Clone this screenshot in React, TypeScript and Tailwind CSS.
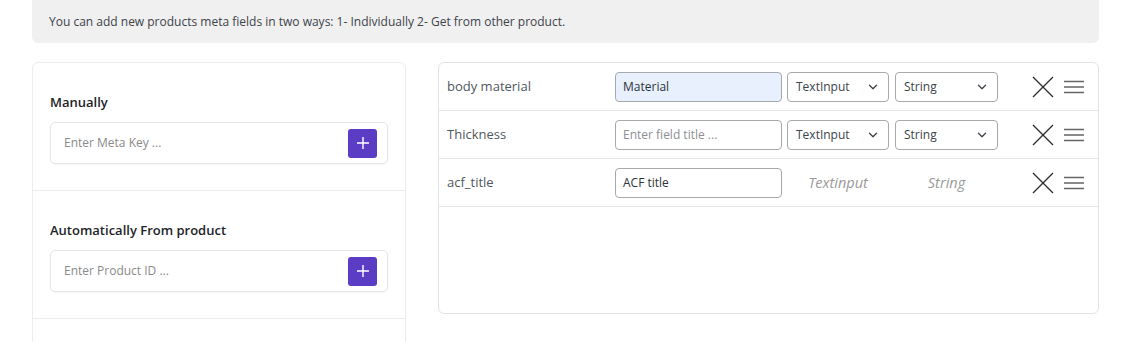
import { ChevronDown } from "lucide-react";

const font = { fontFamily: '"Open Sans", "Liberation Sans", sans-serif' };

interface Field {
  key: string;
  title: string;
  placeholder?: string;
  autofill?: boolean;
  editable: boolean;
}

const fields: Field[] = [
  { key: "body material", title: "Material", autofill: true, editable: true },
  { key: "Thickness", title: "", placeholder: "Enter field title ...", editable: true },
  { key: "acf_title", title: "ACF title", editable: false },
];

const PlusButton = () => (
  <button className="flex size-[29px] items-center justify-center rounded-[3px] bg-[#5b3cc4]">
    <svg width="14" height="14" viewBox="0 0 14 14">
      <path d="M7 1v12M1 7h12" stroke="#fff" strokeWidth="1.4" />
    </svg>
  </button>
);

const AddBox = ({ title, placeholder }: { title: string; placeholder: string }) => (
  <div className="h-[128px] border-b border-[#ececec] px-[17px] pt-[30px]">
    <p className="mb-[11px] h-[18px] text-[13px] font-semibold leading-[18px] text-[#1d2327]">{title}</p>
    <div className="flex h-[42px] items-center justify-between rounded-[5px] border border-[#e6e6e6] pl-[13px] pr-[10px] shadow-[0_1px_2px_rgba(0,0,0,0.04)]">
      <span className="text-[12px] text-[#8a8a8a]">{placeholder}</span>
      <PlusButton />
    </div>
  </div>
);

const Select = ({ value, w }: { value: string; w: string }) => (
  <div className={`flex h-[30px] ${w} items-center justify-between rounded-[4px] border border-[#a7aaad] pl-[8px] pr-[8px] text-[12px] text-[#3c434a]`}>
    <span>{value}</span>
    <ChevronDown className="size-[14px] text-[#3c434a]" strokeWidth={2.2} />
  </div>
);

const Row = ({ f }: { f: Field }) => (
  <div className="flex h-[48px] items-center border-b border-[#e6e6e6] pl-[8px]">
    <span className="w-[168px] text-[13px] text-[#50575e]">{f.key}</span>
    <div
      className={`flex h-[30px] w-[167px] items-center rounded-[4px] border border-[#a7aaad] px-[7px] text-[12px] ${
        f.autofill ? "bg-[#e8f0fe]" : "bg-white"
      }`}
    >
      {f.title ? (
        <span className="text-[#2c3338]">{f.title}</span>
      ) : (
        <span className="text-[#8c8f94]">{f.placeholder}</span>
      )}
    </div>
    {f.editable ? (
      <div className="ml-[5px] flex gap-[6px]">
        <Select value="TextInput" w="w-[102px]" />
        <Select value="String" w="w-[103px]" />
      </div>
    ) : (
      <div className="ml-[5px] flex gap-[6px] text-[14.5px] italic text-[#9a9a9a]">
        <span className="w-[102px] text-center">Textinput</span>
        <span className="w-[103px] text-center">String</span>
      </div>
    )}
    <svg className="ml-[34px]" width="22" height="22" viewBox="0 0 22 22">
      <path d="M1 1l20 20M21 1L1 21" stroke="#2c2c2c" strokeWidth="1.3" />
    </svg>
    <svg className="ml-[10px]" width="20" height="14" viewBox="0 0 20 14">
      <path d="M0 1.5h20M0 7h20M0 12.5h20" stroke="#666" strokeWidth="1.4" />
    </svg>
  </div>
);

export default function App() {
  return (
    <div className="h-[342px] w-[1122px] overflow-hidden bg-white" style={font}>
      <div className="ml-[32px] flex h-[43px] w-[1067px] items-center rounded-b-[6px] bg-[#f0f0f0] pl-[17px] text-[12px] text-[#3c434a]">
        You can add new products meta fields in two ways: 1- Individually 2- Get from other product.
      </div>
      <div className="ml-[32px] mt-[19px] flex w-[1067px] gap-[32px]">
        <div className="h-[300px] w-[374px] shrink-0 rounded-t-[6px] border border-[#ececec]">
          <AddBox title="Manually" placeholder="Enter Meta Key ..." />
          <AddBox title="Automatically From product" placeholder="Enter Product ID ..." />
        </div>
        <div className="h-[252px] flex-1 rounded-[6px] border border-[#e3e3e3]">
          {fields.map((f) => (
            <Row key={f.key} f={f} />
          ))}
        </div>
      </div>
    </div>
  );
}
